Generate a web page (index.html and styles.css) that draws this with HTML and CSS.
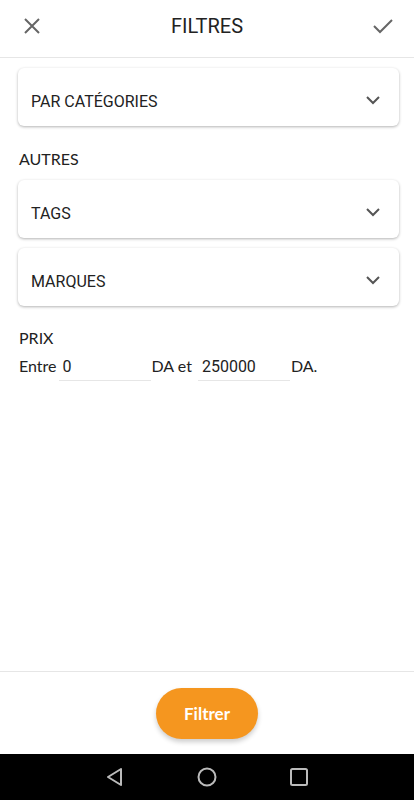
FILE: index.html
```html
<!DOCTYPE html>
<html>
    <head>
        <title>Filtres</title>
        <link rel="stylesheet" href="styles.css">
    </head>
    <body>
        <div class="screen">
            <header class="topbar">
                <svg class="icon" width="20" height="20" viewBox="0 0 20 20"><path d="M3 3L17 17M17 3L3 17" stroke="#666" stroke-width="2" fill="none"/></svg>
                <h1>FILTRES</h1>
                <svg class="icon" width="22" height="20" viewBox="0 0 22 20"><path d="M2 10L8 16L20 4" stroke="#666" stroke-width="2" fill="none"/></svg>
            </header>
            <main class="content">
                <div class="card">
                    <span>PAR CATÉGORIES</span>
                    <svg width="16" height="10" viewBox="0 0 16 10"><path d="M2 2L8 8L14 2" stroke="#555" stroke-width="2" fill="none"/></svg>
                </div>
                <div class="label">AUTRES</div>
                <div class="card">
                    <span>TAGS</span>
                    <svg width="16" height="10" viewBox="0 0 16 10"><path d="M2 2L8 8L14 2" stroke="#555" stroke-width="2" fill="none"/></svg>
                </div>
                <div class="card">
                    <span>MARQUES</span>
                    <svg width="16" height="10" viewBox="0 0 16 10"><path d="M2 2L8 8L14 2" stroke="#555" stroke-width="2" fill="none"/></svg>
                </div>
                <div class="label prix">PRIX</div>
                <div class="range">
                    <span>Entre</span>
                    <div class="field">0</div>
                    <span class="mid">DA et</span>
                    <div class="field">250000</div>
                    <span>DA.</span>
                </div>
            </main>
            <footer class="bottom">
                <button class="btn">Filtrer</button>
            </footer>
            <nav class="navbar">
                <svg width="20" height="20" viewBox="0 0 20 20"><path d="M16 2L3 10L16 18Z" stroke="#bbb" stroke-width="2" fill="none" stroke-linejoin="round"/></svg>
                <svg width="20" height="20" viewBox="0 0 20 20"><circle cx="10" cy="10" r="8.5" stroke="#bbb" stroke-width="2" fill="none"/></svg>
                <svg width="20" height="20" viewBox="0 0 20 20"><rect x="2" y="2" width="16" height="16" rx="1.5" stroke="#bbb" stroke-width="2" fill="none"/></svg>
            </nav>
        </div>
    </body>
</html>
```

FILE: styles.css
```css
body {
    margin: 0;
    font-family: Roboto, "Liberation Sans", sans-serif;
    color: #222;
    background: #fff;
}
.screen {
    width: 414px;
    height: 800px;
    display: flex;
    flex-direction: column;
}
.topbar {
    height: 58px;
    border-bottom: 1px solid #e6e6e6;
    display: flex;
    align-items: center;
    justify-content: space-between;
    padding: 0 20px 5px 22px;
    box-sizing: border-box;
}
.topbar h1 {
    margin: 0;
    font-size: 20px;
    font-weight: 400;
    color: #222;
}
.content {
    flex: 1;
    padding: 10px 15px 0 18px;
}
.card {
    height: 58px;
    box-sizing: border-box;
    border-radius: 6px;
    box-shadow: 0 1px 3px rgba(0, 0, 0, 0.3);
    display: flex;
    align-items: center;
    justify-content: space-between;
    padding: 6px 18px 0 13px;
    margin-bottom: 10px;
    font-size: 16px;
}
.card span {
    padding-top: 3px;
}
.label {
    font-family: Lato, sans-serif;
    font-size: 16px;
    margin: 23px 0 12px 1px;
    color: #222;
}
.label.prix {
    margin: 22px 0 9px 1px;
}
.range {
    display: flex;
    align-items: baseline;
    font-family: Lato, sans-serif;
    font-size: 16px;
    margin-left: 1px;
}
.range span {
    margin-right: 2px;
}
.range .mid {
    margin-right: 6px;
}
.field {
    width: 88px;
    line-height: 22px;
    padding-bottom: 2px;
    border-bottom: 1px solid #e6e6e6;
    font-family: Roboto, sans-serif;
    font-size: 16px;
    padding-left: 4px;
    margin-right: 1px;
}
.bottom {
    height: 82px;
    border-top: 1px solid #e6e6e6;
    display: flex;
    justify-content: center;
    align-items: flex-start;
}
.btn {
    margin-top: 16px;
    width: 102px;
    height: 51px;
    border: none;
    border-radius: 26px;
    background: #f5961f;
    color: #fff;
    font-family: Lato, sans-serif;
    font-weight: 700;
    font-size: 17px;
    box-shadow: 0 3px 5px rgba(0, 0, 0, 0.2);
}
.navbar {
    height: 46px;
    background: #000;
    display: flex;
    align-items: center;
    justify-content: center;
    gap: 72px;
}
```
